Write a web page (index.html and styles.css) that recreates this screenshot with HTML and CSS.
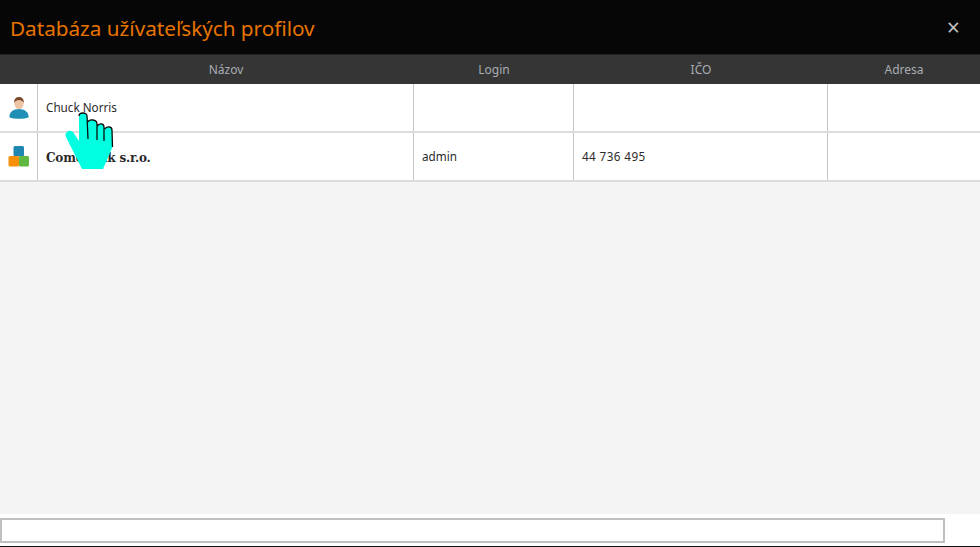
FILE: index.html
```html
<!DOCTYPE html>
<html lang="sk">
<head>
<meta charset="utf-8">
<title>Databáza užívateľských profilov</title>
<link rel="stylesheet" href="styles.css">
</head>
<body>
<div class="app">
  <header class="titlebar">
    <h1 class="title">Databáza užívateľských profilov</h1>
    <span class="close">×</span>
  </header>
  <div class="row head">
    <div class="cell c-icon"></div>
    <div class="cell c-name">Názov</div>
    <div class="cell c-login">Login</div>
    <div class="cell c-ico">IČO</div>
    <div class="cell c-addr">Adresa</div>
  </div>
  <div class="row item">
    <div class="cell c-icon">
      <svg class="icon" width="24" height="24" viewBox="0 0 24 24">
        <path d="M2.500 21.500c-.6-5 3.500-8.500 9.500-8.500s10 3.500 9.500 8.500c-4 1.800-15 1.800-19 0z" fill="#1f8fb5"/>
        <ellipse cx="12" cy="7.500" rx="4.600" ry="5.800" fill="#eec4a4"/>
        <path d="M7.300 7C6.800 3 9.300 1.100 12 1.100s5.200 1.900 4.700 5.900c-1-2.200-2.800-2.900-4.700-2.900S8.300 4.800 7.300 7z" fill="#7a4a2c"/>
      </svg>
    </div>
    <div class="cell c-name">Chuck Norris</div>
    <div class="cell c-login"></div>
    <div class="cell c-ico"></div>
    <div class="cell c-addr"></div>
  </div>
  <div class="row item">
    <div class="cell c-icon">
      <svg class="icon" width="24" height="24" viewBox="0 0 24 24">
        <rect x="6.500" y="1" width="10.500" height="10.500" rx="1.500" fill="#1f86b0"/>
        <rect x="1.500" y="11" width="10.500" height="10.500" rx="1.500" fill="#f79009"/>
        <rect x="12" y="11" width="10" height="10.500" rx="1.500" fill="#5fb83f"/>
      </svg>
    </div>
    <div class="cell c-name strong">Comexlink s.r.o.</div>
    <div class="cell c-login">admin</div>
    <div class="cell c-ico number">44 736 495</div>
    <div class="cell c-addr"></div>
  </div>
  <div class="empty"></div>
  <div class="searchbar"><div class="search"></div></div>
  <svg class="cursor" width="52" height="60" viewBox="0 0 52 60">
    <path d="M15 5C15 1 23 1 23 5L24 11C25 8 33 8 33 13L33.500 15C34.500 12 40 12 40 16L41 18C42 15 48 15 48 19L48.500 36 39 58H18L10 42 2 26C0 21 6 18 9 21L15 30Z" fill="#00ffe1"/>
    <path d="M23 5L24 28M33 13V29M40 16V30M48 19L48.500 36M23 5C23 1 15 1 15 5M24 11C25 8 33 8 33 13M33.500 15C34.500 12 40 12 40 16M41 18C42 15 48 15 48 19" fill="none" stroke="#0b0b0b" stroke-width="1.300"/>
  </svg>
</div>
</body>
</html>
```
FILE: styles.css
```css
html, body {
  margin: 0;
  padding: 0;
  background: #fff;
}
.app {
  position: relative;
  width: 980px;
  height: 547px;
  overflow: hidden;
  display: flex;
  flex-direction: column;
  font-family: "Noto Sans", "DejaVu Sans", sans-serif;
  color: #2a2a2a;
}
.titlebar {
  flex: 0 0 54px;
  box-sizing: border-box;
  background: #060606;
  display: flex;
  align-items: center;
  justify-content: space-between;
  padding: 1px 20px 0 10px;
}
.title {
  margin: 0;
  font-size: 20.700px;
  font-weight: 400;
  color: #e87400;
}
.close {
  color: #c0c0c0;
  font-size: 23px;
  line-height: 1;
}
.row {
  display: flex;
}
.head {
  flex: 0 0 30px;
  background: #353535;
  color: #a9adb3;
  font-size: 12px;
  border-top: 1px solid #222;
  box-sizing: border-box;
}
.head .cell {
  justify-content: center;
  padding: 0;
  border: 0;
}
.item {
  flex: 0 0 49px;
  box-sizing: border-box;
  border-bottom: 2px solid #dcdcdc;
  background: #fff;
  font-size: 11.700px;
}
.cell {
  display: flex;
  align-items: center;
  box-sizing: border-box;
  padding-left: 8px;
  padding-bottom: 1px;
  border-right: 1px solid #c4c4c4;
}
.c-icon {
  width: 38px;
  padding: 0;
  justify-content: center;
}
.c-name { width: 376px; }
.c-login { width: 160px; }
.c-ico { width: 254px; }
.c-addr { width: 152px; border-right: 0; }
.number {
  letter-spacing: 0.400px;
}
.strong {
  font-weight: 700;
  font-family: "DejaVu Serif", serif;
  font-size: 12px;
  letter-spacing: -0.200px;
  padding-bottom: 0;
  padding-top: 2px;
}
.empty {
  flex: 1;
  background: #f4f4f4;
}
.searchbar {
  flex: 0 0 33px;
  box-sizing: border-box;
  padding: 4px 0 3px;
  background: #fff;
  border-bottom: 1px solid #111;
}
.search {
  width: 945px;
  height: 25px;
  box-sizing: border-box;
  border: 2px solid #c0c0c0;
  background: #fff;
}
.icon {
  filter: blur(0.300px);
}
.cursor {
  position: absolute;
  left: 64px;
  top: 111px;
}
```
